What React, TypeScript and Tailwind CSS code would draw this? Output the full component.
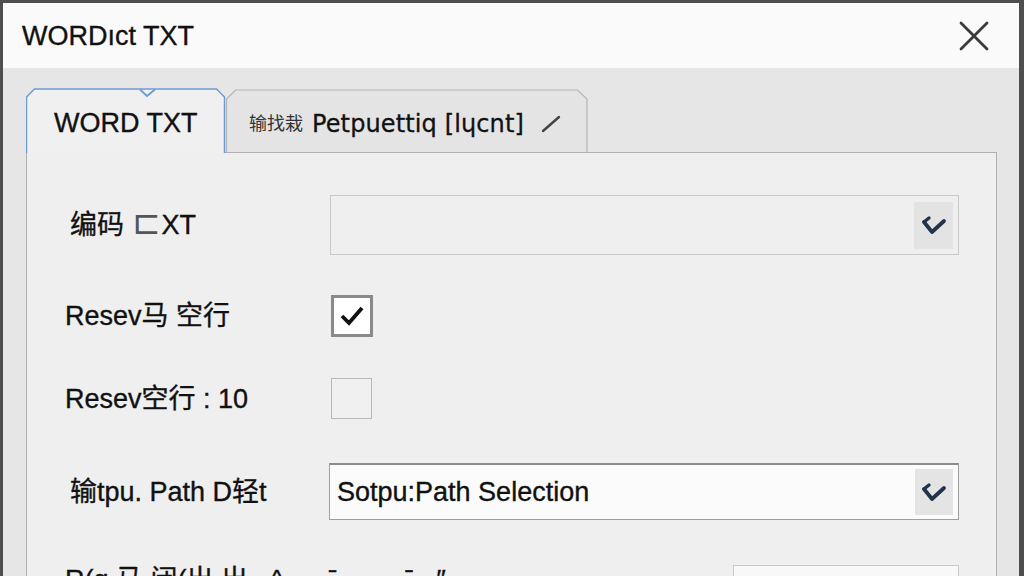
import React from "react";

const font = { fontFamily: '"Liberation Sans", "Noto Sans CJK SC", Arial, sans-serif' };

function Chevron() {
  return (
    <svg width="30" height="26" viewBox="0 0 30 26">
      <path d="M5 10 L10 6" stroke="#22344a" strokeWidth="3.4" strokeLinecap="round" fill="none" />
      <path d="M5 10 L13 20 L25 9" stroke="#22344a" strokeWidth="3.8" strokeLinecap="round" strokeLinejoin="round" fill="none" />
    </svg>
  );
}

const txt = "text-[27px] leading-[30px] text-[#111] [-webkit-text-stroke:0.35px_#111]";

export default function App() {
  return (
    <div
      className="w-[1024px] h-[576px] overflow-hidden bg-[#4e4e4e] pl-[3px] pr-[5px] pt-[3px]"
      style={font}
    >
      <div className="flex flex-col h-[573px] bg-[#e6e6e6]">
        {/* Title bar */}
        <div className="h-[65px] shrink-0 bg-[#fafafa] flex items-center justify-between pl-[19px] pr-[29px]">
          <span className={txt}>WORDıct TXT</span>
          <svg width="32" height="32" viewBox="0 0 32 32">
            <path d="M3 3 L29 29 M29 3 L3 29" stroke="#3a3a3a" strokeWidth="2.8" strokeLinecap="round" />
          </svg>
        </div>

        {/* Body */}
        <div className="flex flex-col flex-1 pt-[20px]">
          {/* Tabs */}
          <div className="flex items-end ml-[23px] h-[64px]">
            <div className="relative z-10 w-[200px] h-[65px] -mb-px flex items-center pl-[28px]">
              <svg className="absolute inset-0" width="200" height="65" viewBox="0 0 200 65">
                <path
                  d="M0.5 65 L0.5 9 L8.5 1 L190.5 1 L198.5 9 L198.5 65"
                  fill="#f0f0f0"
                  stroke="#6e9bd2"
                  strokeWidth="1.5"
                />
                <path d="M114 1.5 L121 8 L129 1.5" fill="none" stroke="#6e9bd2" strokeWidth="1.8" />
              </svg>
              <span className={`relative mt-[4px] ${txt}`}>WORD TXT</span>
            </div>
            <div className="relative w-[362px] h-[63px] flex items-center pl-[23px]">
              <svg className="absolute inset-0" width="362" height="63" viewBox="0 0 362 63">
                <path
                  d="M0.5 63 L0.5 10 L9.5 1 L351.5 1 L361 10 L361 63"
                  fill="#e4e4e4"
                  stroke="#b4b4b4"
                  strokeWidth="1.2"
                />
              </svg>
              <span className="relative flex items-center mt-[6px] text-[#111]">
                <span className="text-[18px] leading-[24px] text-[#333]">输找栽</span>
                <span
                  className="ml-[9px] text-[24px] leading-[30px] [-webkit-text-stroke:0.3px_#111]"
                  style={{ fontFamily: '"DejaVu Sans", "Liberation Sans", sans-serif', letterSpacing: "0.005em" }}
                >
                  Petpuettiq [lɥcnt]
                </span>
                <svg className="ml-[16px]" width="22" height="20" viewBox="0 0 22 20">
                  <path d="M3 17 L19 3" stroke="#444" strokeWidth="2.4" strokeLinecap="round" />
                </svg>
              </span>
            </div>
          </div>

          {/* Panel */}
          <div className="ml-[23px] w-[971px] flex-1 border border-[#b0b0b0] bg-[#efefef] pt-[42px] pl-[41px] flex flex-col">
            {/* Row 1 */}
            <div className="flex items-center h-[60px]">
              <div className={`w-[262px] shrink-0 pl-[2px] flex items-center ${txt}`}>
                <span>编码</span>
                <span
                  className="relative -top-[3px] ml-[8px] mr-[1px] text-[#555] text-[34px] leading-[30px] [-webkit-text-stroke:0px]"
                  style={{ fontFamily: '"DejaVu Sans", sans-serif' }}
                >
                  ⊏
                </span>
                <span>XT</span>
              </div>
              <div className="w-[629px] h-[60px] border border-[#c9c9c9] bg-[#efefef] flex items-center justify-end pr-[5px]">
                <div className="w-[39px] h-[47px] bg-[#e3e3e3] flex items-center justify-center">
                  <Chevron />
                </div>
              </div>
            </div>

            {/* Row 2 */}
            <div className="flex items-center h-[42px] mt-[40px]">
              <div className={`w-[262px] shrink-0 -ml-[3px] mr-[3px] ${txt}`}>Resev马 空行</div>
              <div className="ml-[1px] w-[42px] h-[42px] border-[3px] border-[#8a8a8a] bg-white flex items-center justify-center">
                <svg width="26" height="24" viewBox="0 0 26 24">
                  <path d="M3 12 L10 19 L23 4" stroke="#111" strokeWidth="3.8" fill="none" strokeLinejoin="miter" />
                </svg>
              </div>
            </div>

            {/* Row 3 */}
            <div className="flex items-center h-[41px] mt-[41px]">
              <div className={`w-[262px] shrink-0 -ml-[3px] mr-[3px] ${txt}`}>Resev空行 : 10</div>
              <div className="ml-[1px] w-[41px] h-[41px] border border-[#b8b8b8] bg-[#f0f0f0]" />
            </div>

            {/* Row 4 */}
            <div className="flex items-center h-[57px] mt-[44px]">
              <div className={`w-[262px] shrink-0 pl-[2px] -mr-[1px] ${txt}`}>输tpu. Path D轻t</div>
              <div className="w-[630px] h-[57px] border border-[#9e9e9e] border-t-2 border-t-[#8c8c8c] bg-[#fbfbfb] flex items-center justify-between pl-[7px] pr-[5px]">
                <span className={txt}>Sotpu:Path Selection</span>
                <div className="w-[38px] h-[46px] bg-[#e4e4e4] flex items-center justify-center">
                  <Chevron />
                </div>
              </div>
            </div>

            {/* Row 5 (partially visible) */}
            <div className="flex items-start h-[60px] mt-[45px]">
              <div className={`w-[665px] shrink-0 -ml-[3px] mr-[3px] whitespace-nowrap ${txt}`}>
                R(ɑ 马 闭(出 出 &nbsp;&nbsp;^ &nbsp;&nbsp;&nbsp;&nbsp;&nbsp;ˉ &nbsp;&nbsp;&nbsp;&nbsp;&nbsp;&nbsp;&nbsp;&nbsp;ˉ &nbsp;&nbsp;″
              </div>
              <div className="w-[226px] h-[60px] border border-[#c9c9c9] bg-[#f8f8f8]" />
            </div>
          </div>
        </div>
      </div>
    </div>
  );
}
